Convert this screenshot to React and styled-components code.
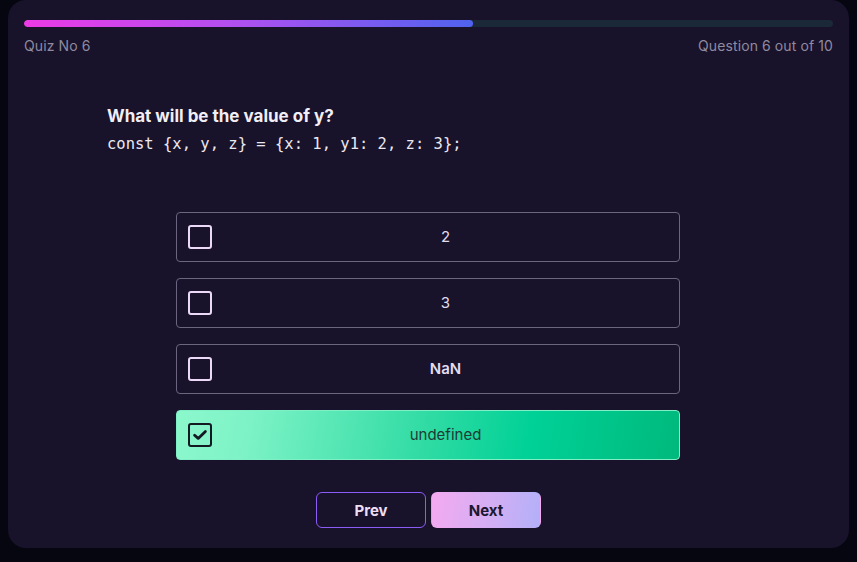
import styled, { createGlobalStyle } from 'styled-components';

const Global = createGlobalStyle`
  html, body {
    margin: 0;
    background: #05060f;
  }
  body {
    font-family: Inter, "Noto Sans", sans-serif;
  }
`

const Card = styled.div`
  box-sizing: border-box;
  margin: 0 8px;
  height: 548px;
  background: #18122b;
  border-radius: 18px;
  padding: 20px 16px 0;
  display: flex;
  flex-direction: column;
`

const Track = styled.div`
  height: 7px;
  border-radius: 4px;
  background: #1b2837;
  overflow: hidden;
`

const Fill = styled.div`
  height: 100%;
  border-radius: 4px;
  background: linear-gradient(90deg, #ec3ae6 0%, #b44ff0 45%, #4f63ef 100%);
`

const Meta = styled.div`
  display: flex;
  justify-content: space-between;
  margin-top: 10px;
  font-size: 14px;
  color: #8f8a9f;
  letter-spacing: 0.1px;
`

const Question = styled.div`
  margin: 52px 0 0 83px;
`

const Title = styled.div`
  font-size: 17px;
  font-weight: 700;
  color: #f1eef6;
`

const Code = styled.div`
  margin-top: 9px;
  font-family: "DejaVu Sans Mono", monospace;
  font-size: 15.5px;
  color: #ebe8f0;
`

const Options = styled.div`
  margin: 59px 0 0 152px;
  width: 504px;
  display: flex;
  flex-direction: column;
  gap: 16px;
`

const Option = styled.div`
  box-sizing: border-box;
  height: 50px;
  padding-left: 11px;
  border-radius: 4px;
  border: 1px solid ${p => p.$selected ? '#7ff0c6' : '#6b6580'};
  background: ${p => p.$selected
    ? 'linear-gradient(100deg, #8cf8cc 0%, #7cf2c6 15%, #2fdba3 50%, #00d197 70%, #00b97c 100%)'
    : 'transparent'};
  display: flex;
  align-items: center;
  font-size: 15px;
  color: ${p => p.$selected ? '#1d3a35' : '#e3dcef'};
`

const Label = styled.span`
  flex: 1;
  text-align: center;
  margin-top: -2px;
  font-weight: ${p => p.$bold ? 600 : 400};
`

const Box = styled.div`
  box-sizing: border-box;
  flex: none;
  width: 24px;
  height: 24px;
  border-radius: 3px;
  border: 2.5px solid ${p => p.$checked ? '#141a22' : '#ebd9f7'};
  display: flex;
  align-items: center;
  justify-content: center;
`

const Buttons = styled.div`
  margin-top: 32px;
  display: flex;
  justify-content: center;
  gap: 5px;
`

const Button = styled.button`
  width: 110px;
  height: 36px;
  border-radius: 6px;
  font-family: Inter, sans-serif;
  font-size: 15px;
  font-weight: 700;
  cursor: pointer;
  border: 1px solid ${p => p.$primary ? 'transparent' : '#8b5cf6'};
  background: ${p => p.$primary ? 'linear-gradient(100deg, #f4aaf0 0%, #d6aef3 50%, #b2b0f9 100%)' : 'transparent'};
  color: ${p => p.$primary ? '#1b1830' : '#ecdff5'};
`

const options = ['2', '3', 'NaN', 'undefined']

export default function App() {
  const selected = 3
  return (
    <>
      <Global />
      <Card>
        <Track><Fill style={{ width: '449px' }} /></Track>
        <Meta>
          <span>Quiz No 6</span>
          <span>Question 6 out of 10</span>
        </Meta>
        <Question>
          <Title>What will be the value of y?</Title>
          <Code>{'const {x, y, z} = {x: 1, y1: 2, z: 3};'}</Code>
        </Question>
        <Options>
          {options.map((o, i) => (
            <Option key={o} $selected={i === selected}>
              <Box $checked={i === selected}>
                {i === selected && (
                  <svg width="16" height="16" viewBox="0 0 16 16">
                    <path d="M2.6 8.2 L6.2 11.4 L13.4 4.4" fill="none" stroke="#141a22" strokeWidth="2.8" strokeLinecap="round" strokeLinejoin="round" />
                  </svg>
                )}
              </Box>
              <Label $bold={o === 'NaN'}>{o}</Label>
            </Option>
          ))}
        </Options>
        <Buttons>
          <Button>Prev</Button>
          <Button $primary>Next</Button>
        </Buttons>
      </Card>
    </>
  )
}
